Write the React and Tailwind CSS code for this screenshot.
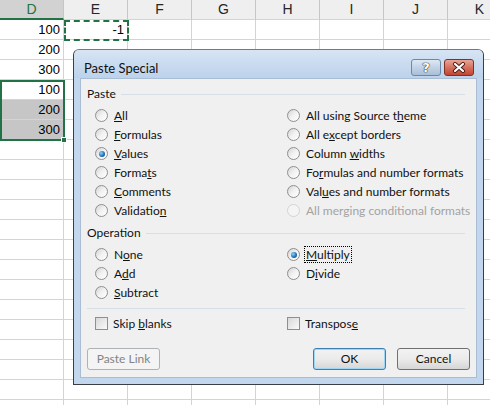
import React from 'react'

const COLS = [
  { id: 'D', w: 64 },
  { id: 'E', w: 64 },
  { id: 'F', w: 64 },
  { id: 'G', w: 64 },
  { id: 'H', w: 64 },
  { id: 'I', w: 64 },
  { id: 'J', w: 64 },
  { id: 'K', w: 64 },
]

const CELLS = { 'D0': '100', 'D1': '200', 'D2': '300', 'D3': '100', 'D4': '200', 'D5': '300', 'E0': '-1' }
const GREY = ['D4', 'D5']

const dialogFont = { fontFamily: 'Lato, "Open Sans", sans-serif' }

function Radio({ checked, disabled }) {
  return (
    <span className={`relative inline-flex w-[13px] h-[13px] shrink-0 rounded-full border items-center justify-center ${disabled ? 'border-[#d4d4d4] bg-[#f4f4f4]' : 'border-[#8e8f8f] bg-gradient-to-br from-[#d4d4d4] via-[#f2f2f2] to-white'}`}>
      {checked && <span className="w-[6px] h-[6px] rounded-full bg-[radial-gradient(circle_at_35%_35%,#8ad3ff,#1d68b5_60%,#0b3b74)]" />}
    </span>
  )
}

function Check() {
  return <span className="inline-block w-[13px] h-[13px] shrink-0 border border-[#8e8f8f] bg-gradient-to-br from-[#d8d8d8] to-[#fafafa]" />
}

function Opt({ children, checked, disabled, focus }) {
  return (
    <div className="h-[19px] flex items-center gap-[5px] whitespace-nowrap">
      <Radio checked={checked} disabled={disabled} />
      <span className={`leading-[15px] px-[1px] ${disabled ? 'text-[#a3a3a3]' : 'text-[#111]'} ${focus ? 'outline outline-1 outline-dotted outline-black' : ''}`}>{children}</span>
    </div>
  )
}

function GroupLabel({ children }) {
  return (
    <div className="h-[16px] flex items-center gap-[5px] pr-[5px]">
      <span className="text-[#111]">{children}</span>
      <span className="flex-1 h-px bg-[#d5dfe5]" />
    </div>
  )
}

function Btn({ children, variant }) {
  const cls = {
    default: 'border-[#3c7fb1] bg-gradient-to-b from-[#f2f2f2] via-[#ebebeb] to-[#d6d6d6] text-[#111] shadow-[inset_0_0_0_1px_#9fd5f5]',
    normal: 'border-[#707070] bg-gradient-to-b from-[#f2f2f2] via-[#ebebeb] to-[#d6d6d6] text-[#111]',
    disabled: 'border-[#adb2b5] bg-[#f4f4f4] text-[#838383]',
  }[variant]
  return (
    <div className={`w-[73px] h-[22px] rounded-[3px] border flex items-center justify-center ${cls}`}>{children}</div>
  )
}

export default function App() {
  return (
    <div className="relative w-[490px] h-[405px] overflow-hidden bg-white" style={{ fontFamily: '"Liberation Sans", Arial, sans-serif' }}>
      {/* header */}
      <div className="flex h-[20px]">
        {COLS.map((c) => (
          <div key={c.id} style={{ width: c.w }}
            className={`shrink-0 flex items-center justify-center text-[14px] border-r border-[#c6c6c6] ${c.id === 'D' ? 'bg-[#d2d2d2] text-[#217346] border-b-2 border-b-[#217346]' : 'bg-[#efefef] text-[#262626] border-b border-b-[#d4d4d4]'}`}>
            {c.id}
          </div>
        ))}
      </div>
      {/* rows */}
      {Array.from({ length: 20 }).map((_, r) => (
        <div key={r} className="flex h-[20px]">
          {COLS.map((c) => {
            const k = c.id + r
            return (
              <div key={k} style={{ width: c.w }}
                className={`shrink-0 border-r border-b border-[#d4d4d4] text-right pr-[3px] text-[13px] leading-[20px] text-black ${GREY.includes(k) ? 'bg-[#c6c6c6]' : ''}`}>
                {CELLS[k] ?? ''}
              </div>
            )
          })}
        </div>
      ))}

      {/* copy marquee on E1 */}
      <div className="absolute left-[64px] top-[20px] w-[65px] h-[21px] border-2 border-dashed border-[#217346]" />
      {/* selection D4:D6 */}
      <div className="absolute left-0 top-[80px] w-[65px] h-[61px] border-2 border-[#217346]" />
      <div className="absolute left-[61px] top-[137px] w-[6px] h-[6px] bg-[#217346] border border-white" />

      {/* dialog */}
      <div className="absolute left-[73px] top-[49px] w-[411px] h-[336px] rounded-t-[6px] border border-[#3a3f46] border-t-[#6c7a8a] bg-[#c2d6ee] flex flex-col text-[12px]" style={dialogFont}>
        <div className="h-[28px] shrink-0 rounded-t-[5px] bg-gradient-to-b from-[#d7e4f4] to-[#bcd2ec] flex items-start justify-between pl-[10px] pr-[9px]">
          <span className="mt-[10px] text-[13px] text-[#111] leading-[16px]">Paste Special</span>
          <div className="mt-[9px] flex gap-[3px]">
            <div className="w-[30px] h-[17px] rounded-[3px] border border-[#6d88a6] bg-gradient-to-b from-[#dfe8f3] via-[#c1d2e6] to-[#a9bfd9] flex items-center justify-center">
              <span className="text-[13px] font-bold leading-none text-white" style={{ fontFamily: '"DejaVu Sans", sans-serif', textShadow: '0 0 1px #333, 0 0 1px #333, 0 0 1px #333' }}>?</span>
            </div>
            <div className="w-[30px] h-[17px] rounded-[3px] border border-[#7e3126] bg-gradient-to-b from-[#e8a597] via-[#d5705f] to-[#c4432f] flex items-center justify-center">
              <svg width="14" height="11" viewBox="0 0 14 11">
                <path d="M3 2 L11 9 M11 2 L3 9" stroke="#4a1b14" strokeWidth="4" strokeLinecap="round" />
                <path d="M3 2 L11 9 M11 2 L3 9" stroke="#fff" strokeWidth="2.2" strokeLinecap="round" />
              </svg>
            </div>
          </div>
        </div>
        <div className="flex-1 mx-[6px] mb-[6px] border border-[#a9bdd5] bg-[#f0f0f0] flex flex-col pl-[6px] pt-[7px] pb-[7px] pr-[6px]">
          <GroupLabel>Paste</GroupLabel>
          <div className="mt-[4px] pl-[8px] grid grid-cols-[192px_1fr]">
            <div className="flex flex-col">
              <Opt><u>A</u>ll</Opt>
              <Opt><u>F</u>ormulas</Opt>
              <Opt checked><u>V</u>alues</Opt>
              <Opt>Forma<u>t</u>s</Opt>
              <Opt><u>C</u>omments</Opt>
              <Opt>Validatio<u>n</u></Opt>
            </div>
            <div className="flex flex-col">
              <Opt>All using Source t<u>h</u>eme</Opt>
              <Opt>All e<u>x</u>cept borders</Opt>
              <Opt>Column <u>w</u>idths</Opt>
              <Opt>Fo<u>r</u>mulas and number formats</Opt>
              <Opt>Val<u>u</u>es and number formats</Opt>
              <Opt disabled>All merging conditional formats</Opt>
            </div>
          </div>
          <div className="mt-[5px]"><GroupLabel>Operation</GroupLabel></div>
          <div className="mt-[4px] pl-[8px] grid grid-cols-[192px_1fr]">
            <div className="flex flex-col">
              <Opt>N<u>o</u>ne</Opt>
              <Opt>A<u>d</u>d</Opt>
              <Opt><u>S</u>ubtract</Opt>
            </div>
            <div className="flex flex-col">
              <Opt checked focus><u>M</u>ultiply</Opt>
              <Opt>D<u>i</u>vide</Opt>
            </div>
          </div>
          <div className="mt-[6px] mr-[5px] h-px bg-[#d5dfe5]" />
          <div className="mt-[5px] pl-[8px] grid grid-cols-[192px_1fr]">
            <div className="h-[19px] flex items-center gap-[5px]"><Check /><span className="text-[#111]">Skip <u>b</u>lanks</span></div>
            <div className="h-[19px] flex items-center gap-[5px]"><Check /><span className="text-[#111]">Transpos<u>e</u></span></div>
          </div>
          <div className="mt-auto flex items-center">
            <Btn variant="disabled">Paste Link</Btn>
            <div className="ml-auto flex gap-[11px]">
              <Btn variant="default">OK</Btn>
              <Btn variant="normal">Cancel</Btn>
            </div>
          </div>
        </div>
      </div>
    </div>
  )
}
